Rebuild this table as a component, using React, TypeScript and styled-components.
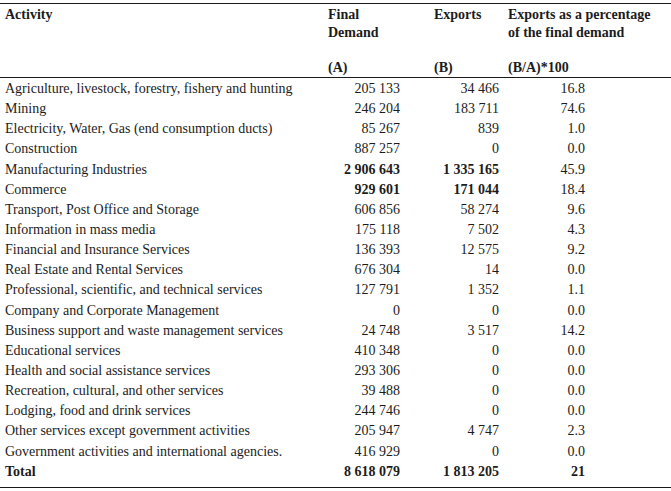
import React from 'react';
import styled, { createGlobalStyle } from 'styled-components';

const GlobalStyle = createGlobalStyle`
  html, body {
    margin: 0;
    padding: 0;
    background: #ffffff;
  }
  body {
    font-family: "Liberation Serif", "Times New Roman", serif;
    color: #1c1c1c;
  }
`;

const COLS = '323px 97px 83px 1fr';

const Table = styled.div`
  width: 671px;
  padding-top: 3px;
  font-size: 14px;
`;

const Head = styled.div`
  border-top: 1.5px solid #1a1a1a;
  border-bottom: 1px solid #1a1a1a;
  font-weight: 700;
  line-height: 18px;
`;

const HeadRow = styled.div<{ $top: number }>`
  display: grid;
  grid-template-columns: ${COLS};
  padding-top: ${p => p.$top}px;
`;

const HeadCell = styled.div<{ $pad: number }>`
  padding-left: ${p => p.$pad}px;
`;

const Body = styled.div`
  border-bottom: 1.5px solid #1a1a1a;
  padding-top: 1px;
  padding-bottom: 5px;
`;

const Row = styled.div`
  display: grid;
  grid-template-columns: ${COLS};
  height: 20.15px;
  line-height: 20.15px;
  white-space: nowrap;
`;

const Label = styled.div<{ $bold?: boolean }>`
  padding-left: 5px;
  font-weight: ${p => (p.$bold ? 700 : 400)};
`;

const Num = styled.div<{ $pad: number; $bold?: boolean }>`
  text-align: right;
  padding-right: ${p => p.$pad}px;
  font-weight: ${p => (p.$bold ? 700 : 400)};
`;

type Line = {
  label: string;
  a: string;
  b: string;
  pct: string;
  boldA?: boolean;
  boldB?: boolean;
  total?: boolean;
};

const rows: Line[] = [
  { label: 'Agriculture, livestock, forestry, fishery and hunting', a: '205 133', b: '34 466', pct: '16.8' },
  { label: 'Mining', a: '246 204', b: '183 711', pct: '74.6' },
  { label: 'Electricity, Water, Gas (end consumption ducts)', a: '85 267', b: '839', pct: '1.0' },
  { label: 'Construction', a: '887 257', b: '0', pct: '0.0' },
  { label: 'Manufacturing Industries', a: '2 906 643', b: '1 335 165', pct: '45.9', boldA: true, boldB: true },
  { label: 'Commerce', a: '929 601', b: '171 044', pct: '18.4', boldA: true, boldB: true },
  { label: 'Transport, Post Office and Storage', a: '606 856', b: '58 274', pct: '9.6' },
  { label: 'Information in mass media', a: '175 118', b: '7 502', pct: '4.3' },
  { label: 'Financial and Insurance Services', a: '136 393', b: '12 575', pct: '9.2' },
  { label: 'Real Estate and Rental Services', a: '676 304', b: '14', pct: '0.0' },
  { label: 'Professional, scientific, and technical services', a: '127 791', b: '1 352', pct: '1.1' },
  { label: 'Company and Corporate Management', a: '0', b: '0', pct: '0.0' },
  { label: 'Business support and waste management services', a: '24 748', b: '3 517', pct: '14.2' },
  { label: 'Educational services', a: '410 348', b: '0', pct: '0.0' },
  { label: 'Health and social assistance services', a: '293 306', b: '0', pct: '0.0' },
  { label: 'Recreation, cultural, and other services', a: '39 488', b: '0', pct: '0.0' },
  { label: 'Lodging, food and drink services', a: '244 746', b: '0', pct: '0.0' },
  { label: 'Other services except government activities', a: '205 947', b: '4 747', pct: '2.3' },
  { label: 'Government activities and international agencies.', a: '416 929', b: '0', pct: '0.0' },
  { label: 'Total', a: '8 618 079', b: '1 813 205', pct: '21', total: true },
];

export default function App() {
  return (
    <>
      <GlobalStyle />
      <Table>
        <Head>
          <HeadRow $top={2}>
            <HeadCell $pad={5}>Activity</HeadCell>
            <HeadCell $pad={5}>Final<br />Demand</HeadCell>
            <HeadCell $pad={14}>Exports</HeadCell>
            <HeadCell $pad={5}>Exports as a percentage<br />of the final demand</HeadCell>
          </HeadRow>
          <HeadRow $top={17}>
            <HeadCell $pad={5} />
            <HeadCell $pad={5}>(A)</HeadCell>
            <HeadCell $pad={14}>(B)</HeadCell>
            <HeadCell $pad={5}>(B/A)*100</HeadCell>
          </HeadRow>
        </Head>
        <Body>
          {rows.map(r => (
            <Row key={r.label}>
              <Label $bold={r.total}>{r.label}</Label>
              <Num $pad={20} $bold={r.boldA || r.total}>{r.a}</Num>
              <Num $pad={4} $bold={r.boldB || r.total}>{r.b}</Num>
              <Num $pad={86} $bold={r.total}>{r.pct}</Num>
            </Row>
          ))}
        </Body>
      </Table>
    </>
  );
}
